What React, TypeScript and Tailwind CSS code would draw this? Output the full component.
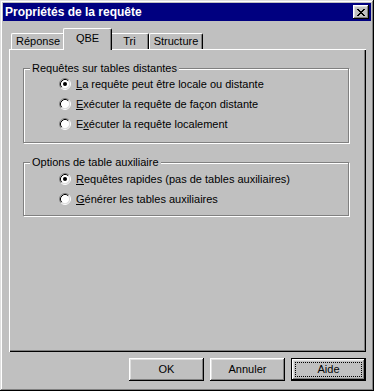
import React from "react";

function Radio({ checked }: { checked?: boolean }) {
  return (
    <svg width="12" height="12" viewBox="0 0 12 12" className="shrink-0">
      <circle cx="6" cy="6" r="4.5" fill="#fff" />
      <path d="M2.11 9.89 A5.5 5.5 0 0 1 9.89 2.11" stroke="#808080" fill="none" strokeWidth="1" />
      <path d="M9.89 2.11 A5.5 5.5 0 0 1 2.11 9.89" stroke="#fff" fill="none" strokeWidth="1" />
      <path d="M2.82 9.18 A4.5 4.5 0 0 1 9.18 2.82" stroke="#000" fill="none" strokeWidth="1" />
      <path d="M9.18 2.82 A4.5 4.5 0 0 1 2.82 9.18" stroke="#dfdfdf" fill="none" strokeWidth="1" />
      {checked && <circle cx="6" cy="6" r="2" fill="#000" />}
    </svg>
  );
}

function Row({ checked, children }: { checked?: boolean; children: React.ReactNode }) {
  return (
    <div className="h-[20px] flex items-center">
      <Radio checked={checked} />
      <span className="ml-[5px] leading-[13px] whitespace-nowrap">{children}</span>
    </div>
  );
}

const bevel =
  "shadow-[inset_-1px_-1px_#000,inset_1px_1px_#fff,inset_-2px_-2px_#808080,inset_2px_2px_#dfdfdf]";

export default function App() {
  return (
    <div className="w-[374px] h-[391px] bg-[#c0c0c0] shadow-[inset_-1px_-1px_#000,inset_1px_1px_#dfdfdf,inset_-2px_-2px_#808080,inset_2px_2px_#fff] p-[3px] flex flex-col font-['Liberation_Sans',Arial,sans-serif] text-[11px] text-black select-none">
      {/* Title bar */}
      <div className="h-[18px] shrink-0 bg-[#000080] flex items-center justify-between pl-[2px] pr-[2px]">
        <span className="text-white font-bold text-[12px] leading-[14px]">Propriétés de la requête</span>
        <div className={`w-[16px] h-[14px] bg-[#c0c0c0] flex items-center justify-center ${bevel}`}>
          <svg width="8" height="7" viewBox="0 0 8 7" shapeRendering="crispEdges">
            <path
              d="M0 0h2v1H0zM6 0h2v1H6zM1 1h2v1H1zM5 1h2v1H5zM2 2h4v1H2zM3 3h2v1H3zM2 4h4v1H2zM1 5h2v1H1zM5 5h2v1H5zM0 6h2v1H0zM6 6h2v1H6z"
              fill="#000"
            />
          </svg>
        </div>
      </div>

      {/* Body */}
      <div className="flex-1 flex flex-col pl-[6px] pr-[5px] pt-[7px] pb-[7px]">
        {/* Tabs */}
        <div className="relative z-10 h-[22px] mb-[-1px] flex items-end pl-[2px] shrink-0">
          <div className="w-[54px] h-[16px] mb-[1px] flex items-center justify-center border-l border-t border-r border-l-white border-t-white border-r-black shadow-[inset_-1px_0_#808080] rounded-t-[2px]">
            Réponse
          </div>
          <div className="w-[49px] h-[22px] -mx-[2px] bg-[#c0c0c0] flex items-start justify-center pt-[3px] border-l border-t border-r border-l-white border-t-white border-r-black shadow-[inset_-1px_0_#808080] rounded-t-[2px] relative z-10">
            <span className="leading-[13px]">QBE</span>
          </div>
          <div className="w-[39px] h-[16px] mb-[1px] flex items-center justify-center border-l border-t border-r border-l-white border-t-white border-r-black shadow-[inset_-1px_0_#808080] rounded-t-[2px]">
            Tri
          </div>
          <div className="w-[54px] h-[16px] mb-[1px] flex items-center justify-center border-l border-t border-r border-l-white border-t-white border-r-black shadow-[inset_-1px_0_#808080] rounded-t-[2px]">
            Structure
          </div>
        </div>

        {/* Panel */}
        <div className="flex-1 shadow-[inset_1px_1px_#fff,inset_-1px_-1px_#000,inset_-2px_-2px_#808080] pt-[13px] pl-[14px] pr-[17px] flex flex-col">
          <fieldset className="border border-[#808080] shadow-[1px_1px_0_#fff,inset_1px_1px_0_#fff] m-0 p-0 min-w-0">
            <legend className="ml-[6px] px-[2px] bg-[#c0c0c0] leading-[13px]">Requêtes sur tables distantes</legend>
            <div className="pl-[35px] -mt-[1px] pb-[8px]">
              <Row checked>
                <span className="underline">L</span>a requête peut être locale ou distante
              </Row>
              <Row>
                <span className="underline">E</span>xécuter la requête de façon distante
              </Row>
              <Row>
                E<span className="underline">x</span>écuter la requête localement
              </Row>
            </div>
          </fieldset>

          <fieldset className="mt-[13px] border border-[#808080] shadow-[1px_1px_0_#fff,inset_1px_1px_0_#fff] m-0 p-0 min-w-0">
            <legend className="ml-[6px] px-[2px] bg-[#c0c0c0] leading-[13px]">Options de table auxiliaire</legend>
            <div className="pl-[35px] pb-[6px]">
              <Row checked>
                <span className="underline">R</span>equêtes rapides (pas de tables auxiliaires)
              </Row>
              <Row>
                <span className="underline">G</span>énérer les tables auxiliaires
              </Row>
            </div>
          </fieldset>
        </div>

        {/* Buttons */}
        <div className="mt-[6px] h-[23px] shrink-0 flex justify-end gap-[6px]">
          <button className={`w-[75px] h-[23px] bg-[#c0c0c0] ${bevel} flex items-center justify-center`}>OK</button>
          <button className={`w-[75px] h-[23px] bg-[#c0c0c0] ${bevel} flex items-center justify-center`}>Annuler</button>
          <button className="w-[75px] h-[23px] bg-[#c0c0c0] border border-black shadow-[inset_-1px_-1px_#000,inset_1px_1px_#fff,inset_-2px_-2px_#808080,inset_2px_2px_#dfdfdf] p-[3px] flex">
            <span className="flex-1 border border-dotted border-black flex items-center justify-center">Aide</span>
          </button>
        </div>
      </div>
    </div>
  );
}
